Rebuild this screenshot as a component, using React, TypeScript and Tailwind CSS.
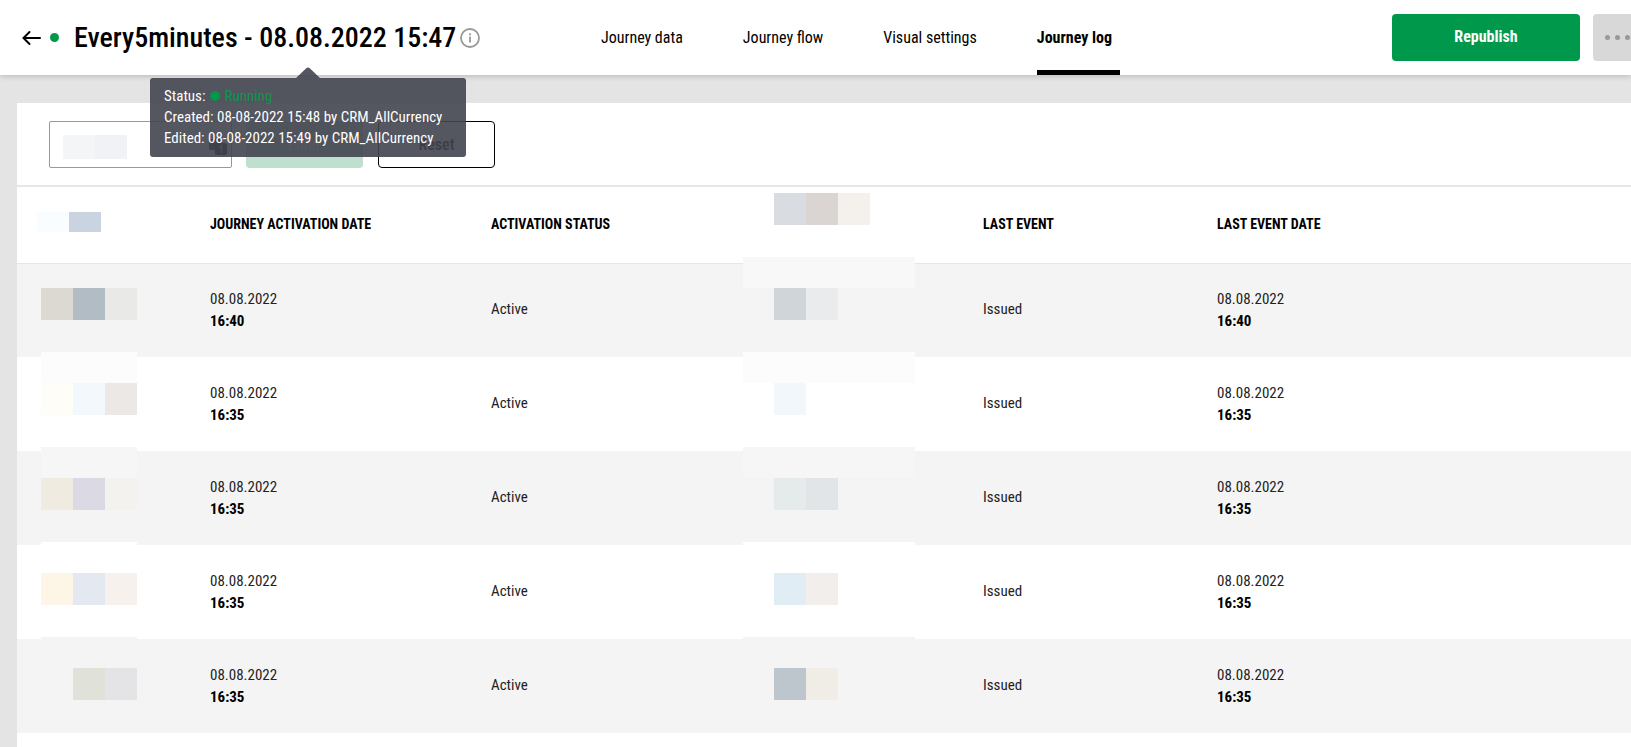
import React from "react";

type LogRow = { date: string; time: string; status: string; event: string };

const rows: LogRow[] = [
  { date: "08.08.2022", time: "16:40", status: "Active", event: "Issued" },
  { date: "08.08.2022", time: "16:35", status: "Active", event: "Issued" },
  { date: "08.08.2022", time: "16:35", status: "Active", event: "Issued" },
  { date: "08.08.2022", time: "16:35", status: "Active", event: "Issued" },
  { date: "08.08.2022", time: "16:35", status: "Active", event: "Issued" },
];

type Mask = { strip: string; blocks: string[] };

const idMasks: Mask[] = [
  { strip: "bg-transparent", blocks: ["bg-[#dcd9d2]", "bg-[#b2bcc5]", "bg-[#e9e9e8]"] },
  { strip: "bg-[#fcfcfc]", blocks: ["bg-[#fefdf8]", "bg-[#f3f8fc]", "bg-[#ece8e5]"] },
  { strip: "bg-[#f6f6f6]", blocks: ["bg-[#efebe1]", "bg-[#dbd9e3]", "bg-[#f3f2ee]"] },
  { strip: "bg-white", blocks: ["bg-[#fdf5e5]", "bg-[#e3e8f1]", "bg-[#f6f1ec]"] },
  { strip: "bg-[#f4f4f4]", blocks: ["bg-transparent", "bg-[#e0e1d9]", "bg-[#e4e3e6]"] },
];

const userMasks: Mask[] = [
  { strip: "bg-[#f8f8f8]", blocks: ["bg-[#d0d5d9]", "bg-[#e9ebec]"] },
  { strip: "bg-[#fcfcfc]", blocks: ["bg-[#f2f7fb]"] },
  { strip: "bg-[#f6f6f6]", blocks: ["bg-[#e5ebea]", "bg-[#e2e5e8]"] },
  { strip: "bg-white", blocks: ["bg-[#e1edf4]", "bg-[#f1eeeb]"] },
  { strip: "bg-[#f4f4f4]", blocks: ["bg-[#bdc6cc]", "bg-[#f0ece6]"] },
];

function Blocks({ colors, height = "h-8" }: { colors: string[]; height?: string }) {
  return (
    <div className="flex" aria-hidden="true">
      {colors.map((c, i) => (
        <span key={i} className={`block w-8 ${height} ${c}`} />
      ))}
    </div>
  );
}

function MaskColumn({ masks, className, inset }: { masks: Mask[]; className: string; inset: string }) {
  return (
    <div className={`pointer-events-none absolute ${className}`} aria-hidden="true">
      {masks.map((m, i) => (
        <div key={i} className="h-[95px]">
          <div className={`h-[31px] ${m.strip}`} />
          <div className={inset}>
            <Blocks colors={m.blocks} />
          </div>
        </div>
      ))}
    </div>
  );
}

function DateCell({ date, time }: { date: string; time: string }) {
  return (
    <td className="p-0 leading-[22px]">
      <div>{date}</div>
      <div className="font-bold text-black">{time}</div>
    </td>
  );
}

const tabs = ["Journey data", "Journey flow", "Visual settings", "Journey log"];

function Header() {
  return (
    <header className="relative z-10 flex h-[75px] bg-white shadow-[0_1px_6px_rgba(0,0,0,0.2)]">
      <div className="flex w-[601px] shrink-0 items-center pl-[22px]">
        <button type="button" aria-label="Back" className="shrink-0">
          <svg width="20" height="16" viewBox="0 0 20 16" fill="none" stroke="#000" strokeWidth="2" strokeLinecap="round">
            <path d="M18 8H1.5M7.5 2L1.5 8l6 6" />
          </svg>
        </button>
        <span className="ml-2 h-[9px] w-[9px] rounded-full bg-[#00994b]" />
        <div className="relative ml-[15px]">
          <div className="flex items-center">
            <h1 className="text-[28px] leading-[42px] font-medium whitespace-nowrap text-black">Every5minutes - 08.08.2022 15:47</h1>
            <button type="button" aria-label="Journey info" className="ml-1">
              <svg width="20" height="20" viewBox="0 0 20 20" fill="none" stroke="#999" strokeWidth="1.8">
                <circle cx="10" cy="10" r="9" />
                <path d="M10 8.4v6M10 5.2v2" />
              </svg>
            </button>
          </div>
          <div role="tooltip" className="absolute top-[61px] left-[76px] w-[316px] rounded-[3px] bg-[#41444f]/90 py-2 pl-[14px] text-[15px] leading-[21px] whitespace-nowrap text-white">
            <svg className="absolute -top-[11px] left-[146px]" width="24" height="11" viewBox="0 0 24 11">
              <path d="M0 11L10 1.4Q12 -.6 14 1.4L24 11z" fill="#41444f" fillOpacity="0.9" />
            </svg>
            <p className="flex items-center">
              Status:
              <span className="ml-[5px] mr-1 h-[10px] w-[10px] rounded-full bg-[#00994b]" />
              <span className="text-[#0f944f]">Running</span>
            </p>
            <p>Created: 08-08-2022 15:48 by CRM_AllCurrency</p>
            <p>Edited: 08-08-2022 15:49 by CRM_AllCurrency</p>
          </div>
        </div>
      </div>
      <nav className="flex gap-[52px] text-base">
        {tabs.map((t) => (
          <a
            key={t}
            href="#"
            aria-current={t === "Journey log" ? "page" : undefined}
            className={`flex items-center border-y-[5px] border-t-transparent pr-2 whitespace-nowrap text-black ${
              t === "Journey log" ? "border-b-black font-bold" : "border-b-transparent"
            }`}
          >
            {t}
          </a>
        ))}
      </nav>
      <div className="ml-auto flex shrink-0 items-center gap-[13px] overflow-hidden pb-[1px]">
        <button type="button" className="h-[47px] w-[188px] rounded bg-[#00994b] text-base font-bold text-white">
          Republish
        </button>
        <button type="button" aria-label="More" className="flex h-[47px] w-[38px] items-center gap-[5px] rounded-l bg-[#d8d8d8] pl-3">
          <span className="h-[5px] w-[5px] shrink-0 rounded-full bg-[#999]" />
          <span className="h-[5px] w-[5px] shrink-0 rounded-full bg-[#999]" />
          <span className="h-[5px] w-[5px] shrink-0 rounded-full bg-[#999]" />
        </button>
      </div>
    </header>
  );
}

function Filters() {
  return (
    <form className="flex h-[84px] items-center border-b-2 border-[#e6e6e6] pt-[1px] pl-8" onSubmit={(e) => e.preventDefault()}>
      <div className="relative">
        <input aria-label="Search" className="block h-[47px] w-[183px] rounded-[2px] border border-[#999] bg-white px-3 text-base" />
        <div className="pointer-events-none absolute top-[14px] left-[14px]">
          <Blocks colors={["bg-[#f4f5f7]", "bg-[#f0f2f6]"]} height="h-6" />
        </div>
        <svg className="pointer-events-none absolute top-[18px] right-[5px]" width="18" height="17" viewBox="0 0 18 17" aria-hidden="true">
          <rect width="13" height="11" rx="2" fill="#333" />
          <rect x="6" y="4" width="12" height="12" rx="2.5" fill="#222" />
          <path d="M10.5 8.5l2-1.5v7" fill="none" stroke="#aaa" strokeWidth="1.6" />
        </svg>
      </div>
      <button type="submit" className="ml-[14px] h-[47px] w-[117px] rounded bg-[#bfdfcf] text-base font-medium text-white">
        Filter
      </button>
      <button type="reset" className="ml-[15px] h-[47px] w-[117px] rounded border border-black bg-white text-base font-medium text-black">
        Reset
      </button>
    </form>
  );
}

export default function App() {
  return (
    <div className="min-h-screen overflow-hidden bg-[#e4e4e4] font-['Roboto_Condensed','Liberation_Sans_Narrow',Roboto,sans-serif] text-[#222]">
      <Header />
      <main className="mt-7 ml-[17px] min-h-[644px] bg-white">
        <Filters />
        <div className="relative">
          <table className="w-full table-fixed border-collapse text-left text-[15px]">
            <colgroup>
              <col className="w-[193px]" />
              <col className="w-[281px]" />
              <col className="w-[283px]" />
              <col className="w-[209px]" />
              <col className="w-[234px]" />
              <col />
            </colgroup>
            <thead>
              <tr className="h-[76px] border-b border-[#e6e6e6] text-sm text-black">
                <th className="p-0 pt-[25px] pl-5 align-top" aria-label="ID">
                  <Blocks colors={["bg-[#f9fdff]", "bg-[#cad3e0]"]} height="h-5" />
                </th>
                <th className="p-0 pb-[2px] font-bold">JOURNEY ACTIVATION DATE</th>
                <th className="p-0 pb-[2px] font-bold">ACTIVATION STATUS</th>
                <th className="p-0 pt-[6px] align-top" aria-label="User">
                  <Blocks colors={["bg-[#d9dde2]", "bg-[#dad5d2]", "bg-[#f4f0eb]"]} />
                </th>
                <th className="p-0 pb-[2px] font-bold">LAST EVENT</th>
                <th className="p-0 pb-[2px] font-bold">LAST EVENT DATE</th>
              </tr>
            </thead>
            <tbody>
              {rows.map((r, i) => (
                <tr key={i} className="h-[94px] odd:bg-[#f4f4f4]">
                  <td />
                  <DateCell date={r.date} time={r.time} />
                  <td className="p-0 pb-[2px]">{r.status}</td>
                  <td />
                  <td className="p-0 pb-[2px]">{r.event}</td>
                  <DateCell date={r.date} time={r.time} />
                </tr>
              ))}
            </tbody>
          </table>
          <MaskColumn masks={idMasks} className="top-[70px] left-6 w-24" inset="" />
          <MaskColumn masks={userMasks} className="top-[70px] left-[726px] w-[172px]" inset="pl-[31px]" />
        </div>
      </main>
    </div>
  );
}
